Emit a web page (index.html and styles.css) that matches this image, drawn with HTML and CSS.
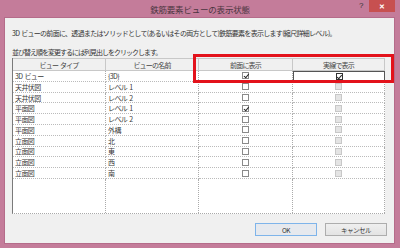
FILE: index.html
```html
<!DOCTYPE html>
<html lang="ja">
<head>
    <meta charset="UTF-8">
    <title>鉄筋要素ビューの表示状態</title>
    <link rel="stylesheet" href="styles.css">
</head>
<body>

<div class="window">
    <div class="titlebar">
        <span class="title">鉄筋要素ビューの表示状態</span>
        <span class="help">?</span>
        <span class="close">&#x2715;</span>
    </div>

    <div class="content">
        <p class="desc">3D ビューの前面に、透過またはソリッドとして(あるいはその両方として)鉄筋要素を表示します(縮尺詳細レベル)。</p>
        <p class="hint">並び替え順を変更するには列見出しをクリックします。</p>

        <div class="table-wrap">
            <div class="grid">
                <div class="head">ビュー タイプ</div>
                <div class="head">ビューの名前</div>
                <div class="head">前面に表示</div>
                <div class="head">実線で表示</div>

                <div class="cell current-row">3D ビュー</div>
                <div class="cell current-row">{3D}</div>
                <div class="cell current-row solid"><span class="box on"></span></div>
                <div class="cell current-row solid focus"><span class="box on dark"></span></div>

                <div class="cell">天井伏図</div>
                <div class="cell">レベル 1</div>
                <div class="cell"><span class="box"></span></div>
                <div class="cell"><span class="box off"></span></div>

                <div class="cell">天井伏図</div>
                <div class="cell">レベル 2</div>
                <div class="cell"><span class="box"></span></div>
                <div class="cell"><span class="box off"></span></div>

                <div class="cell">平面図</div>
                <div class="cell">レベル 1</div>
                <div class="cell"><span class="box on"></span></div>
                <div class="cell"><span class="box off"></span></div>

                <div class="cell">平面図</div>
                <div class="cell">レベル 2</div>
                <div class="cell"><span class="box"></span></div>
                <div class="cell"><span class="box off"></span></div>

                <div class="cell">平面図</div>
                <div class="cell">外構</div>
                <div class="cell"><span class="box"></span></div>
                <div class="cell"><span class="box off"></span></div>

                <div class="cell">立面図</div>
                <div class="cell">北</div>
                <div class="cell"><span class="box"></span></div>
                <div class="cell"><span class="box off"></span></div>

                <div class="cell">立面図</div>
                <div class="cell">東</div>
                <div class="cell"><span class="box"></span></div>
                <div class="cell"><span class="box off"></span></div>

                <div class="cell">立面図</div>
                <div class="cell">西</div>
                <div class="cell"><span class="box"></span></div>
                <div class="cell"><span class="box off"></span></div>

                <div class="cell">立面図</div>
                <div class="cell">南</div>
                <div class="cell"><span class="box"></span></div>
                <div class="cell"><span class="box off"></span></div>

                <div class="filler"></div>
                <div class="filler"></div>
                <div class="filler"></div>
                <div class="filler"></div>
            </div>
            <!-- 注目枠 -->
            <div class="highlight"></div>
        </div>

        <div class="buttons">
            <button class="btn default">OK</button>
            <button class="btn">キャンセル</button>
        </div>
    </div>
</div>

</body>
</html>
```

FILE: styles.css
```css
body {
    margin: 0;
    background-color: #c47c9a;
    font-family: "Noto Sans CJK JP", sans-serif;
    color: #333;
}
.window {
    width: 400px;
    height: 248px;
    display: flex;
    flex-direction: column;
    background-color: #c47c9a;
}
.titlebar {
    height: 18px;
    display: flex;
    align-items: center;
    justify-content: center;
    position: relative;
}
.title {
    font-size: 8.5px;
    color: #4a3540;
    letter-spacing: -0.2px;
}
.help {
    position: absolute;
    left: 359px;
    top: 1px;
    font-size: 8px;
    color: #333;
    font-family: "Liberation Sans", sans-serif;
}
.close {
    position: absolute;
    left: 369px;
    top: 0;
    width: 26px;
    height: 12px;
    background-color: #c75050;
    color: #fff;
    font-size: 7px;
    font-weight: bold;
    display: flex;
    align-items: center;
    justify-content: center;
}
.content {
    margin: 0 6px 5px 5px;
    flex: 1;
    background-color: #f0f0f0;
    box-shadow: 0 0 0 1px #b56c8a;
    padding: 10px 9px 0 7px;
    display: flex;
    flex-direction: column;
}
.desc, .hint {
    margin: 0;
    font-size: 7px;
    line-height: 10px;
    letter-spacing: -1px;
    white-space: nowrap;
}
.desc {
    letter-spacing: -0.7px;
    word-spacing: 1px;
}
.hint {
    margin-top: 9px;
    margin-bottom: 1px;
}
.table-wrap {
    position: relative;
    width: 373px;
    height: 156px;
}
.grid {
    display: grid;
    grid-template-columns: 93px 93px 94px 92px;
    grid-template-rows: 13px repeat(10, 10.8px) 1fr;
    height: 156px;
    box-sizing: border-box;
    background-color: #fff;
    border-left: 1px solid #7a7a7a;
    border-bottom: 1px dotted #aaa;
}
.grid > div {
    box-sizing: border-box;
    border-right: 1px dotted #aaa;
}
.head {
    background-color: #f0f0f0;
    border-top: 1px solid #c8c8c8;
    border-bottom: 1px solid #c8c8c8;
    border-right: 1px solid #c8c8c8 !important;
    font-size: 7px;
    letter-spacing: -0.8px;
    word-spacing: 1px;
    color: #444;
    display: flex;
    align-items: center;
    justify-content: center;
}
.cell {
    border-bottom: 1px dotted #bbb;
    font-size: 7px;
    letter-spacing: -0.6px;
    word-spacing: 1px;
    line-height: 10px;
    padding-left: 2px;
    display: flex;
    align-items: center;
    white-space: nowrap;
    color: #3a3a3a;
}
.cell:has(.box) {
    justify-content: center;
    padding-left: 0;
}
.current-row.solid {
    border-bottom: 1px solid #666;
}
.focus {
    border: 1px solid #555 !important;
}
.box {
    width: 7px;
    height: 7px;
    box-sizing: border-box;
    border: 1px solid #8a8a8a;
    background-color: #fff;
    position: relative;
}
.box.off {
    border-color: #c8c8c8;
    background-color: #e4e4e4;
}
.box.dark {
    border-color: #333;
}
.box.on::after {
    content: "";
    position: absolute;
    left: 1.5px;
    top: 0;
    width: 2px;
    height: 3.5px;
    border-right: 1.2px solid #222;
    border-bottom: 1.2px solid #222;
    transform: rotate(40deg);
}
.highlight {
    position: absolute;
    left: 181px;
    top: -4px;
    width: 201px;
    height: 29px;
    box-sizing: border-box;
    border: 3px solid #e3121b;
}
.buttons {
    display: flex;
    justify-content: flex-end;
    gap: 8px;
    margin-top: 9px;
    margin-right: -2px;
}
.btn {
    width: 62px;
    height: 13px;
    padding: 0;
    font-family: "Noto Sans CJK JP", sans-serif;
    font-size: 6.5px;
    letter-spacing: -0.5px;
    color: #333;
    background: linear-gradient(#efefef, #e3e3e3);
    border: 1px solid #adadad;
}
.btn.default {
    border-color: #7eb4ea;
    background: #e6e9ee;
}
```
